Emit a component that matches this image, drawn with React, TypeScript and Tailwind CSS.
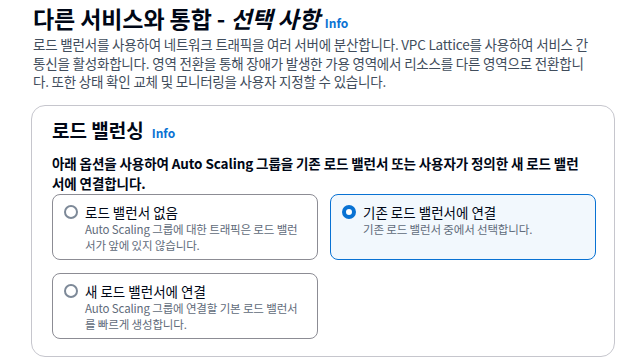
import React, { useState } from "react";

type Option = {
  id: string;
  label: string;
  description: string[];
};

const OPTIONS: Option[] = [
  {
    id: "none",
    label: "로드 밸런서 없음",
    description: ["Auto Scaling 그룹에 대한 트래픽은 로드 밸런", "서가 앞에 있지 않습니다."],
  },
  {
    id: "existing",
    label: "기존 로드 밸런서에 연결",
    description: ["기존 로드 밸런서 중에서 선택합니다."],
  },
  {
    id: "new",
    label: "새 로드 밸런서에 연결",
    description: ["Auto Scaling 그룹에 연결할 기본 로드 밸런서", "를 빠르게 생성합니다."],
  },
];

function Radio({ checked }: { checked: boolean }) {
  return checked ? (
    <span className="mt-[2px] block h-[14px] w-[14px] shrink-0 rounded-full border-[4px] border-[#0972d3] bg-white" />
  ) : (
    <span className="mt-[2px] block h-[14px] w-[14px] shrink-0 rounded-full border-2 border-[#7d8998] bg-white" />
  );
}

export default function App() {
  const [selected, setSelected] = useState("existing");

  return (
    <div
      className="min-h-screen bg-white px-[31px] pt-[3px] text-[#000716]"
      style={{ fontFamily: '"Noto Sans CJK KR", sans-serif' }}
    >
      {/* Section header */}
      <div className="pl-[2px]">
        <h2 className="h-[30px] text-[23px] font-bold leading-[30px] tracking-[-0.1px]">
          다른 서비스와 통합 - <i>선택 사항</i>
          <a className="ml-[5px] text-[12px] font-bold leading-none tracking-normal text-[#0972d3]">Info</a>
        </h2>
        <p className="mt-[2px] text-[13.5px] leading-[18.7px] tracking-[-0.2px] text-[#414d5c]">
          <span className="block h-[18.7px] whitespace-nowrap">
            로드 밸런서를 사용하여 네트워크 트래픽을 여러 서버에 분산합니다. VPC Lattice를 사용하여 서비스 간
          </span>
          <span className="block h-[18.7px] whitespace-nowrap">
            통신을 활성화합니다. 영역 전환을 통해 장애가 발생한 가용 영역에서 리소스를 다른 영역으로 전환합니
          </span>
          <span className="block h-[18.7px] whitespace-nowrap">
            다. 또한 상태 확인 교체 및 모니터링을 사용자 지정할 수 있습니다.
          </span>
        </p>
      </div>

      {/* Load balancing container */}
      <div className="mt-[14px] w-[584px] rounded-[14px] border border-[#c6c6cd] pb-[17px] pl-[20px] pr-[18px] pt-[12px]">
        <h3 className="h-[24px] text-[19px] font-bold leading-[24px]">
          로드 밸런싱
          <a className="ml-[8px] text-[12px] font-bold leading-none text-[#0972d3]">Info</a>
        </h3>
        <p className="mt-[11px] text-[13.5px] font-bold leading-[20px] tracking-[-0.1px]">
          <span className="block h-[20px] whitespace-nowrap">
            아래 옵션을 사용하여 Auto Scaling 그룹을 기존 로드 밸런서 또는 사용자가 정의한 새 로드 밸런
          </span>
          <span className="block h-[20px] whitespace-nowrap">서에 연결합니다.</span>
        </p>

        <div className="mt-px grid grid-cols-[266px_266px] gap-x-[12px] gap-y-[13px]">
          {OPTIONS.map((opt) => {
            const checked = selected === opt.id;
            return (
              <button
                key={opt.id}
                type="button"
                onClick={() => setSelected(opt.id)}
                className={
                  checked
                    ? "flex h-[66px] gap-[7px] rounded-[8px] border border-[#0972d3] bg-[#f2f8fd] pl-[11px] pr-[10px] pt-[8px] text-left"
                    : "flex h-[66px] gap-[7px] rounded-[8px] border border-[#8c8c94] bg-white pl-[11px] pr-[10px] pt-[8px] text-left"
                }
              >
                <Radio checked={checked} />
                <span className="block">
                  <span className="block h-[18px] text-[13.5px] leading-[18px] text-[#000716]">{opt.label}</span>
                  <span className="block text-[11.5px] leading-[16px] tracking-[-0.15px] text-[#5f6b7a]">
                    {opt.description.map((line) => (
                      <span key={line} className="block h-[16px] whitespace-nowrap">
                        {line}
                      </span>
                    ))}
                  </span>
                </span>
              </button>
            );
          })}
        </div>
      </div>
    </div>
  );
}
